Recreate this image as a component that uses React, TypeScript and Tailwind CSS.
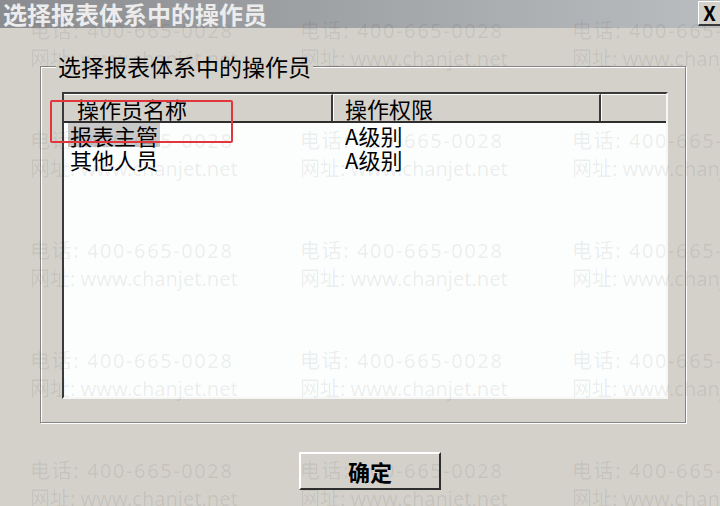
const ROWS = [
  { name: '报表主管', level: 'A级别', selected: true },
  { name: '其他人员', level: 'A级别', selected: false },
];

function Watermark() {
  const cells = Array.from({ length: 15 });
  return (
    <div className="pointer-events-none absolute inset-0 grid grid-cols-[270px_272px_272px] auto-rows-[110px] pl-[30px] pt-[17px] font-['Noto_Sans','Noto_Sans_CJK_SC',sans-serif] text-[20px] leading-[28px] text-black/[0.075]">
      {cells.map((_, i) => (
        <div key={i} className="whitespace-nowrap">
          <div className="tracking-[1.6px]">电话: 400-665-0028</div>
          <div>网址: www.chanjet.net</div>
        </div>
      ))}
    </div>
  );
}

export default function App() {
  return (
    <div className="relative h-[506px] w-[720px] overflow-hidden bg-[#d4d1cb] font-['Noto_Sans_CJK_SC',sans-serif] text-black">
      {/* Title bar */}
      <div className="flex h-[28px] items-start justify-between bg-linear-to-r from-[#8a8c8f] to-[#babdc0] pl-[3px]">
        <span className="mt-[1px] text-[24px] font-bold leading-[26px] text-[#ececec]">选择报表体系中的操作员</span>
        <div className="mt-[1px] flex h-[25px] w-[22px] items-center justify-center border-t border-l border-t-white border-l-white border-b-2 border-b-[#3a3a3a] bg-[#d4d1cb] text-[20px] font-bold leading-none">
          X
        </div>
      </div>

      {/* Group box */}
      <div className="relative ml-[40px] mt-[38px] h-[357px] w-[646px] border border-[#858585] shadow-[inset_1px_1px_0_#fff,1px_1px_0_#fff]">
        <span className="absolute left-[15px] top-[-14px] bg-[#d4d1cb] px-[2px] text-[23px] leading-[26px]">选择报表体系中的操作员</span>

        <div className="ml-[21px] mt-[25px] flex h-[307px] w-[606px] flex-col border-2 border-t-[#3a3a3a] border-l-[#3a3a3a] border-b-[#f6f6f6] border-r-[#f6f6f6] bg-[#fcfdfd]">
          {/* Header */}
          <div className="flex h-[29px] border-b-2 border-b-[#2e2e2e] bg-[#d4d1cb] text-[22px] leading-[26px]">
            <div className="w-[269px] border-r-2 border-r-[#3a3a3a] border-t border-t-white pl-[13px]">操作员名称</div>
            <div className="w-[268px] border-l border-l-white border-r-2 border-r-[#3a3a3a] border-t border-t-white pl-[11px]">操作权限</div>
            <div className="flex-1 border-l border-l-white border-t border-t-white" />
          </div>

          {/* Rows */}
          {ROWS.map(r => (
            <div key={r.name} className="flex h-[24px] text-[22px] leading-[24px]">
              <div className="w-[269px] pl-[4px]">
                <span className={`inline-block px-[2px] ${r.selected ? 'bg-[#c8c8c8]' : ''}`}>{r.name}</span>
              </div>
              <div className="pl-[12px]">{r.level}</div>
            </div>
          ))}
        </div>
      </div>

      {/* Button */}
      <div className="mt-[29px] flex pl-[299px]">
        <button className="flex h-[38px] w-[142px] items-center justify-center border-2 border-t-white border-l-white border-b-[#2e2e2e] border-r-[#2e2e2e] bg-[#d4d1cb] text-[22px] font-bold leading-none">
          确定
        </button>
      </div>

      <Watermark />

      {/* Red annotation box */}
      <div className="pointer-events-none absolute left-[50px] top-[100px] h-[43px] w-[183px] rounded-[2px] border-2 border-[#e0363c]" />
    </div>
  );
}
